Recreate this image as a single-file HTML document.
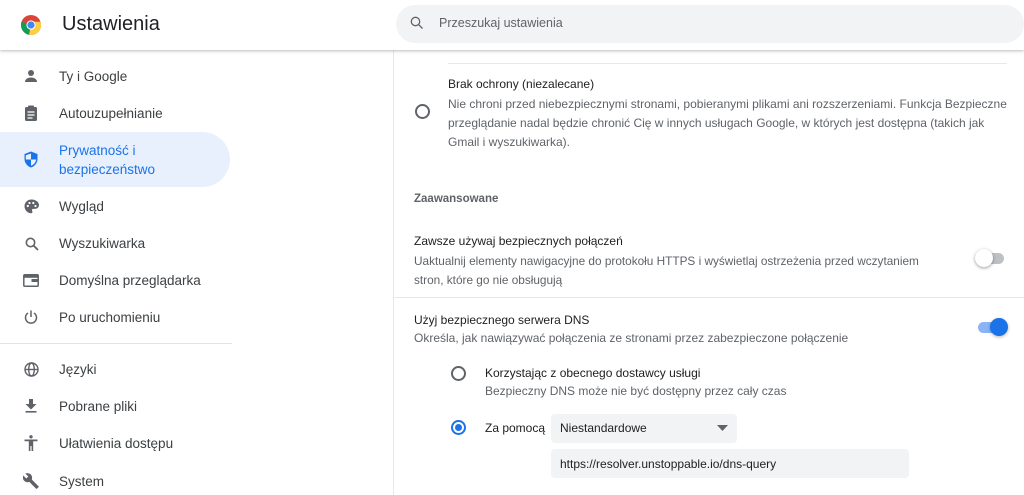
<!DOCTYPE html>
<html><head><meta charset="utf-8"><style>
*{margin:0;padding:0;box-sizing:border-box}
body{width:1024px;height:495px;overflow:hidden;background:#fff;font-family:"Liberation Sans",sans-serif;position:relative;color:#202124}
.a{position:absolute;white-space:nowrap}
.hdr{position:absolute;left:0;top:0;width:1024px;height:50px;background:#fff;box-shadow:0 1px 3px rgba(60,64,67,.35);z-index:2}
.nav{font-size:13.5px;color:#3c4043}
.sub{font-size:12px;color:#5f6368}
.t{font-size:12px;color:#202124}
svg{position:absolute}
</style></head><body>
<div class="hdr">
<svg style="left:20px;top:14px" width="22" height="22" viewBox="0 0 22 22"><circle cx="11" cy="11" r="10" fill="#db4437"/><path d="M11 11 L1.5 7.8 A10 10 0 0 0 9 20.8Z" fill="#0f9d58"/><path d="M11 11 L9 20.8 A10 10 0 0 0 20.5 7.8 L11 7.8Z" fill="#ffcd40"/><circle cx="11" cy="11" r="4.6" fill="#fff"/><circle cx="11" cy="11" r="3.6" fill="#4285f4"/></svg>
<div class="a" style="left:62px;top:13px;font-size:20px;color:#202124">Ustawienia</div>
<div class="a" style="left:396px;top:5px;width:628px;height:38px;border-radius:19px;background:#f1f3f4"></div>
<svg style="left:410px;top:16px" width="14" height="14" viewBox="0 0 14 14"><circle cx="5.5" cy="5.5" r="4.2" fill="none" stroke="#5f6368" stroke-width="1.3"/><path d="M8.6 8.6L12.5 12.5" stroke="#5f6368" stroke-width="1.3"/></svg>
<div class="a" style="left:439px;top:16px;font-size:12.5px;color:#5f6368">Przeszukaj ustawienia</div>
</div>

<div class="a" style="left:0;top:132px;width:230px;height:55px;background:#e8f0fe;border-radius:0 28px 28px 0"></div>
<svg style="left:24px;top:69px" width="14" height="14" viewBox="0 0 14 14"><circle cx="7" cy="4" r="3" fill="#5f6368"/><path d="M1 13c0-3 3-4.5 6-4.5s6 1.5 6 4.5z" fill="#5f6368"/></svg>
<div class="a nav" style="left:59px;top:69px">Ty i Google</div>
<svg style="left:24px;top:105px" width="14" height="16" viewBox="0 0 14 16"><rect x="1" y="2" width="12" height="14" rx="1.5" fill="#5f6368"/><rect x="4" y="0.5" width="6" height="3" rx="1" fill="#5f6368"/><path d="M3.5 7h7M3.5 10h7M3.5 13h5" stroke="#fff" stroke-width="1.2"/></svg>
<div class="a nav" style="left:59px;top:106px">Autouzupełnianie</div>
<svg style="left:24px;top:151px" width="14" height="17" viewBox="0 0 14 17"><path d="M7 0.5L13.5 3v5c0 4-3 7.5-6.5 8.5C3.5 15.5 0.5 12 0.5 8V3z" fill="#1a73e8"/><path d="M7 2.5v6H1.8V4.2zM7 8.5h5.2c-.5 3-2.7 5.5-5.2 6.3z" fill="#fff" opacity=".9"/></svg>
<div class="a nav" style="left:59px;top:143px;color:#1a73e8">Prywatność i</div>
<div class="a nav" style="left:59px;top:162px;color:#1a73e8">bezpieczeństwo</div>
<svg style="left:24px;top:199px" width="15" height="15" viewBox="0 0 15 15"><path d="M7.5 .5C3.5.5.5 3.5.5 7.2s3 7 6.5 7c1 0 1.5-.6 1.5-1.3 0-.8-.6-1-.6-1.8 0-.7.6-1.2 1.3-1.2h1.6c2.5 0 4.2-1.6 4.2-4C15 3 11.5.5 7.5.5z" fill="#5f6368"/><circle cx="3.8" cy="7" r="1.1" fill="#fff"/><circle cx="5.5" cy="4" r="1.1" fill="#fff"/><circle cx="9.3" cy="4" r="1.1" fill="#fff"/><circle cx="11.5" cy="7" r="1.1" fill="#fff"/></svg>
<div class="a nav" style="left:59px;top:199px">Wygląd</div>
<svg style="left:25px;top:237px" width="14" height="14" viewBox="0 0 14 14"><circle cx="5.5" cy="5.5" r="4.2" fill="none" stroke="#5f6368" stroke-width="1.6"/><path d="M8.6 8.6L13 13" stroke="#5f6368" stroke-width="1.8"/></svg>
<div class="a nav" style="left:59px;top:236px">Wyszukiwarka</div>
<svg style="left:23px;top:274px" width="16" height="13" viewBox="0 0 16 13"><rect x="0.8" y="0.8" width="14.4" height="11.4" rx="1" fill="none" stroke="#5f6368" stroke-width="1.5"/><rect x="0.8" y="0.8" width="14.4" height="3" fill="#5f6368"/><rect x="8.5" y="5" width="6" height="3" fill="#5f6368"/></svg>
<div class="a nav" style="left:59px;top:273px">Domyślna przeglądarka</div>
<svg style="left:24px;top:310px" width="14" height="15" viewBox="0 0 14 15"><path d="M7 .5v6.5" stroke="#5f6368" stroke-width="1.5"/><path d="M4 3A5.5 5.5 0 1 0 10 3" fill="none" stroke="#5f6368" stroke-width="1.5"/></svg>
<div class="a nav" style="left:59px;top:310px">Po uruchomieniu</div>
<div class="a" style="left:0;top:343px;width:232px;height:1px;background:#e3e3e3"></div>
<svg style="left:24px;top:362px" width="15" height="15" viewBox="0 0 15 15" fill="none" stroke="#5f6368" stroke-width="1.4"><circle cx="7.5" cy="7.5" r="6.5"/><ellipse cx="7.5" cy="7.5" rx="2.8" ry="6.5"/><path d="M1 7.5h13"/></svg>
<div class="a nav" style="left:59px;top:362px">Języki</div>
<svg style="left:25px;top:399px" width="12" height="14" viewBox="0 0 12 14"><path d="M4 0h4v5h3.5L6 10.5.5 5H4z" fill="#5f6368"/><rect x=".5" y="12" width="11" height="1.6" fill="#5f6368"/></svg>
<div class="a nav" style="left:59px;top:399px">Pobrane pliki</div>
<svg style="left:24px;top:435px" width="14" height="16" viewBox="0 0 14 16"><circle cx="7" cy="1.8" r="1.7" fill="#5f6368"/><path d="M0.5 4.5h13v1.8H9.2V16H7.6v-5H6.4v5H4.8V6.3H0.5z" fill="#5f6368"/></svg>
<div class="a nav" style="left:59px;top:436px">Ułatwienia dostępu</div>
<svg style="left:23px;top:473px" width="16" height="16" viewBox="0 0 16 16"><path d="M15.5 13.2L8.8 6.5c.7-1.700.3-3.7-1.1-5.100C6.2 0 4 -.3 2.3.5l3 3-2 2-3-3c-.9 1.7-.5 3.9.9 5.3 1.4 1.4 3.4 1.8 5.1 1.1l6.7 6.7c.3.3.7.3 1 0l1.6-1.5c.3-.3.3-.7-.1-.9z" fill="#5f6368"/></svg>
<div class="a nav" style="left:59px;top:474px">System</div>

<div class="a" style="left:393px;top:50px;width:1px;height:445px;background:#e8e8e8"></div>
<div class="a" style="left:448px;top:63px;width:559px;height:1px;background:#e8e8e8"></div>
<div class="a" style="left:415px;top:104px;width:15px;height:15px;border:2px solid #5f6368;border-radius:50%"></div>
<div class="a t" style="left:448px;top:77px">Brak ochrony (niezalecane)</div>
<div class="a sub" style="left:448px;top:95px;line-height:19px;white-space:normal;width:570px">Nie chroni przed niebezpiecznymi stronami, pobieranymi plikami ani rozszerzeniami. Funkcja Bezpieczne przeglądanie nadal będzie chronić Cię w innych usługach Google, w których jest dostępna (takich jak Gmail i wyszukiwarka).</div>
<div class="a" style="left:414px;top:193px;font-size:11.5px;font-weight:bold;color:#5f6368">Zaawansowane</div>
<div class="a t" style="left:414px;top:234px">Zawsze używaj bezpiecznych połączeń</div>
<div class="a sub" style="left:414px;top:252px;line-height:19px;font-size:11.8px">Uaktualnij elementy nawigacyjne do protokołu HTTPS i wyświetlaj ostrzeżenia przed wczytaniem<br>stron, które go nie obsługują</div>
<div class="a" style="left:978px;top:253px;width:26px;height:11px;border-radius:6px;background:#bdc1c6"></div>
<div class="a" style="left:975px;top:249px;width:18px;height:18px;border-radius:50%;background:#fff;box-shadow:0 1px 3px rgba(0,0,0,.4)"></div>
<div class="a" style="left:393px;top:297px;width:631px;height:1px;background:#e8e8e8"></div>
<div class="a t" style="left:414px;top:313px">Użyj bezpiecznego serwera DNS</div>
<div class="a sub" style="left:414px;top:331px">Określa, jak nawiązywać połączenia ze stronami przez zabezpieczone połączenie</div>
<div class="a" style="left:978px;top:322px;width:24px;height:11px;border-radius:6px;background:#8ab4f8"></div>
<div class="a" style="left:990px;top:318px;width:18px;height:18px;border-radius:50%;background:#1a73e8;box-shadow:0 1px 3px rgba(0,0,0,.3)"></div>
<div class="a" style="left:451px;top:366px;width:15px;height:15px;border:2px solid #5f6368;border-radius:50%"></div>
<div class="a t" style="left:485px;top:366px">Korzystając z obecnego dostawcy usługi</div>
<div class="a sub" style="left:485px;top:384px">Bezpieczny DNS może nie być dostępny przez cały czas</div>
<div class="a" style="left:451px;top:420px;width:15px;height:15px;border:2px solid #1a73e8;border-radius:50%"></div>
<div class="a" style="left:455px;top:424px;width:7px;height:7px;background:#1a73e8;border-radius:50%"></div>
<div class="a t" style="left:485px;top:421px">Za pomocą</div>
<div class="a" style="left:551px;top:414px;width:186px;height:29px;background:#f1f3f4;border-radius:4px"></div>
<div class="a t" style="left:560px;top:421px">Niestandardowe</div>
<svg style="left:717px;top:425px" width="11" height="6" viewBox="0 0 11 6"><path d="M0 0h11L5.5 6z" fill="#5f6368"/></svg>
<div class="a" style="left:551px;top:449px;width:358px;height:29px;background:#f1f3f4;border-radius:4px"></div>
<div class="a t" style="left:560px;top:457px">https://resolver.unstoppable.io/dns-query</div>
</body></html>
